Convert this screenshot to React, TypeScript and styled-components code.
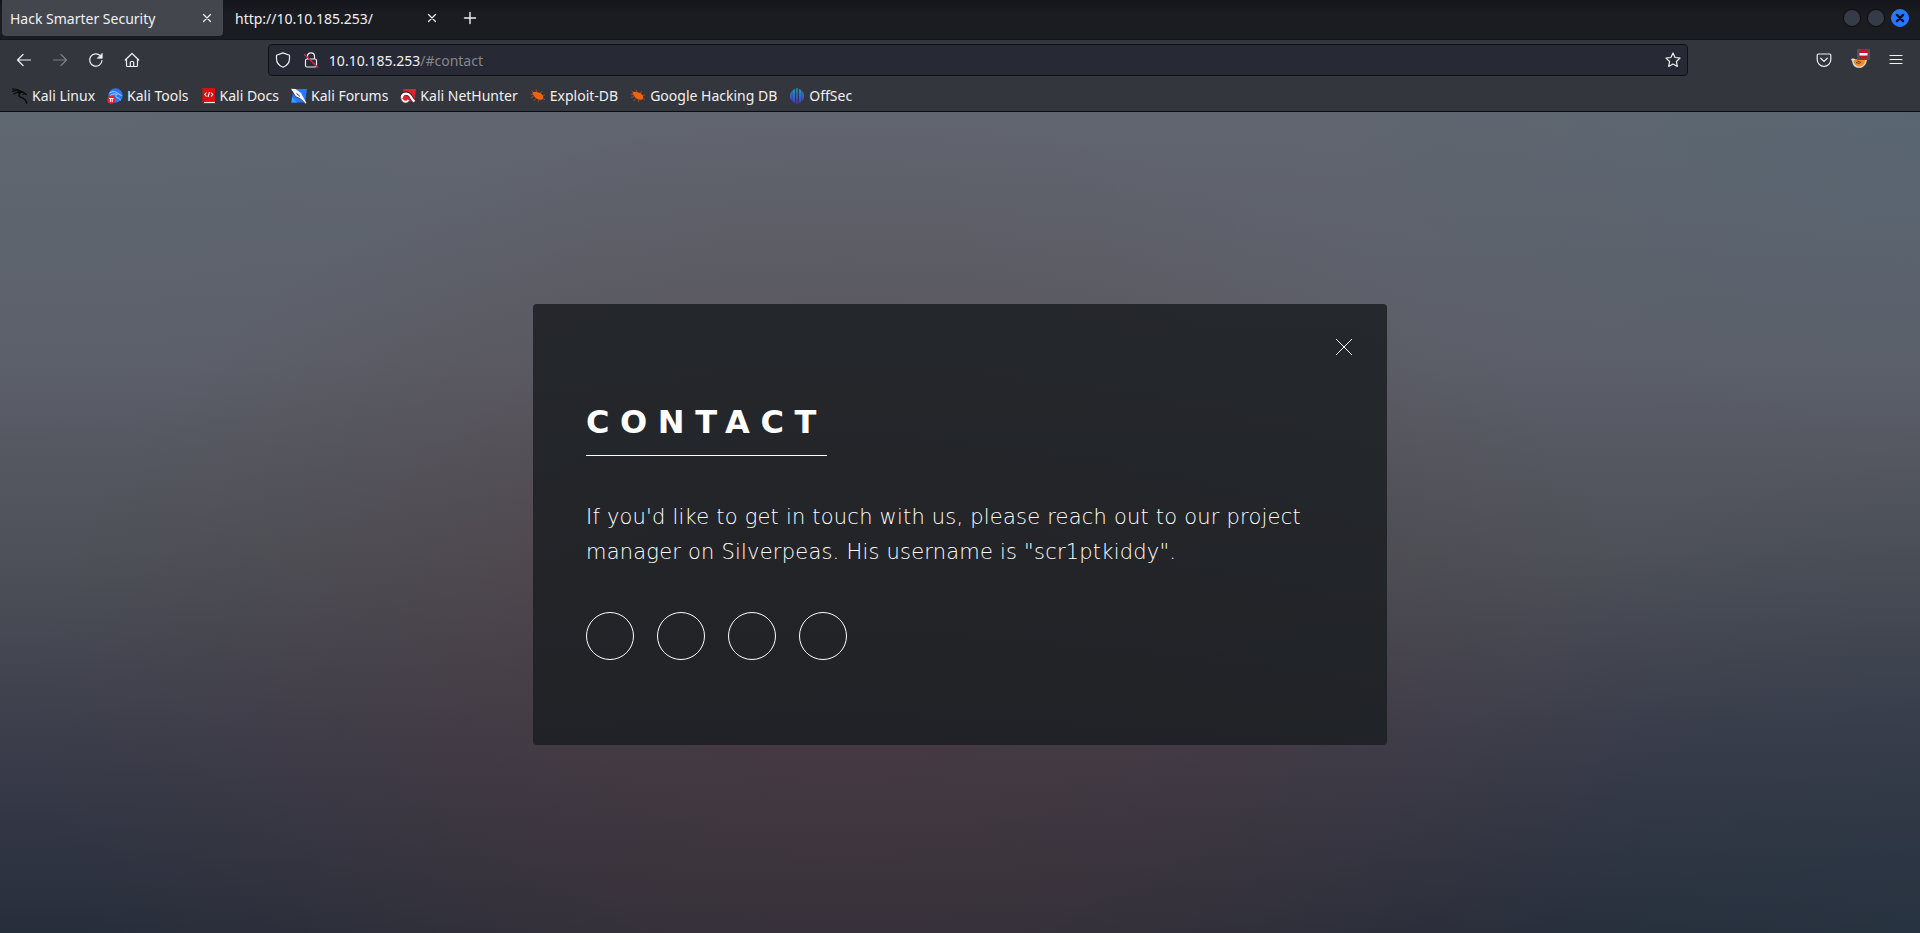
import React from "react";
import styled, { createGlobalStyle } from "styled-components";

const Global = createGlobalStyle`
  *, *::before, *::after { box-sizing: border-box; }
  html, body, #root { height: 100%; margin: 0; }
  body { background: #2a2e3b; color: #f0f0f3; font-family: "Noto Sans", sans-serif; }
  a { color: inherit; text-decoration: none; }
  button { padding: 0; border: 0; background: none; color: inherit; font: inherit; }
  svg { display: block; flex: none; }
`;

const Window = styled.div`
  display: flex;
  flex-direction: column;
  min-height: 100%;
`;

const TitleBar = styled.header`
  display: flex;
  gap: 4px;
  height: 40px;
  padding: 0 11px 3px 2px;
  background: linear-gradient(#14151a, #1b1c21 14px);
  border-bottom: 1px solid #15161a;
`;

const TabList = styled.div`
  display: flex;
  gap: 4px;
`;

const TabBox = styled.div<{ $active?: boolean }>`
  display: flex;
  align-items: center;
  width: 221px;
  height: 36px;
  padding-right: 6px;
  border-radius: 0 0 4px 4px;
  background: ${(p) => (p.$active ? "#43464d" : "transparent")};
`;

const TabLabel = styled.button`
  flex: 1;
  height: 36px;
  padding: 1px 0 0 8px;
  text-align: left;
  font-size: 14px;
  line-height: 36px;
`;

const IconButton = styled.button<{ $size: number; $dim?: boolean }>`
  display: flex;
  align-items: center;
  justify-content: center;
  flex: none;
  width: ${(p) => p.$size}px;
  height: ${(p) => p.$size}px;
  opacity: ${(p) => (p.$dim ? 0.4 : 1)};
`;

const WindowControls = styled.div`
  display: flex;
  align-items: center;
  gap: 6px;
  margin-left: auto;
`;

const WindowDot = styled.button<{ $close?: boolean }>`
  display: flex;
  align-items: center;
  justify-content: center;
  width: 18px;
  height: 18px;
  border-radius: 50%;
  background: ${(p) => (p.$close ? "#2777ff" : "#363b48")};
  border: 1px solid ${(p) => (p.$close ? "#2777ff" : "#0b0c0f")};
  color: #111318;
`;

const NavBar = styled.nav`
  display: flex;
  align-items: center;
  height: 40px;
  padding: 0 6px;
  background: #34363d;
`;

const Spacer = styled.div`
  flex: 1;
`;

const AddressBar = styled.div`
  display: flex;
  align-items: center;
  flex: 12;
  height: 32px;
  padding: 0 4px 0 0;
  border: 1px solid #101116;
  border-radius: 4px;
  background: #272934;
`;

const AddressField = styled.div`
  position: relative;
  flex: 1;
  height: 30px;
  margin-left: 4px;
  font-size: 14px;
  line-height: 30px;
`;

const AddressInput = styled.input`
  width: 100%;
  height: 30px;
  padding: 0;
  border: 0;
  outline: 0;
  background: none;
  color: transparent;
  font: inherit;
`;

const AddressText = styled.span`
  position: absolute;
  inset: 0;
  padding-top: 1px;
  pointer-events: none;
`;

const Faded = styled.span`
  color: #85868e;
`;

const Bookmarks = styled.nav`
  display: flex;
  align-items: center;
  gap: 12px;
  height: 32px;
  padding: 0 12px;
  background: #34363d;
  border-bottom: 1px solid #0c0d12;
`;

const Bookmark = styled.a`
  display: flex;
  align-items: center;
  gap: 4px;
  font-size: 14px;
  line-height: 24px;
  white-space: nowrap;
`;

const Page = styled.main`
  display: flex;
  align-items: center;
  justify-content: center;
  flex: 1;
  padding: 44px 20px 40px;
  background:
    radial-gradient(ellipse 42% 74% at 44% 74%, rgba(82, 54, 56, 0.48), rgba(82, 54, 56, 0.34) 40%, rgba(82, 54, 56, 0.12) 75%, rgba(82, 54, 56, 0)),
    radial-gradient(ellipse 34% 40% at 100% 0%, rgba(78, 104, 118, 0.4), rgba(78, 104, 118, 0)),
    radial-gradient(ellipse 34% 40% at 0% 0%, rgba(92, 106, 116, 0.4), rgba(92, 106, 116, 0)),
    radial-gradient(ellipse 26% 60% at 100% 100%, rgba(40, 58, 72, 0.4), rgba(40, 58, 72, 0)),
    linear-gradient(#61656f 0%, #5c5f69 30%, #4d5058 55%, #3a3c4a 78%, #272e3b 100%);
`;

const Panel = styled.article`
  position: relative;
  width: 100%;
  max-width: 854px;
  padding: 96px 53px 85px;
  border-radius: 4px;
  background: rgba(27, 31, 34, 0.85);
  color: #fff;
  font-family: "DejaVu Sans Light", "DejaVu Sans", sans-serif;
  font-weight: 200;
`;

const PanelClose = styled.button`
  position: absolute;
  top: 0;
  right: 0;
  display: flex;
  align-items: center;
  justify-content: center;
  width: 86px;
  height: 85px;
`;

const Heading = styled.h2`
  width: max-content;
  margin: 0 0 44px;
  padding-bottom: 10px;
  border-bottom: 1px solid #fff;
  font-family: "DejaVu Sans", sans-serif;
  font-size: 32px;
  line-height: 45px;
  font-weight: 700;
  letter-spacing: 0.33em;
  text-transform: uppercase;
`;

const Copy = styled.p`
  margin: 0 0 42px;
  font-size: 21px;
  line-height: 35px;
  letter-spacing: 0.01em;
`;

const SocialList = styled.ul`
  display: flex;
  gap: 23px;
  margin: 0;
  padding: 0;
  list-style: none;
`;

const SocialLink = styled.a`
  display: block;
  width: 48px;
  height: 48px;
  border: 1px solid #fff;
  border-radius: 50%;
`;

type LineIconProps = { size?: number; width?: number; children: React.ReactNode };

const LineIcon = ({ size = 16, width = 1.2, children }: LineIconProps) => (
  <svg width={size} height={size} viewBox="0 0 16 16" fill="none" stroke="currentColor" strokeWidth={width} strokeLinecap="round" strokeLinejoin="round" aria-hidden="true">
    {children}
  </svg>
);

const Cross = () => (
  <LineIcon><path d="M4.5 4.5l7 7M11.5 4.5l-7 7" /></LineIcon>
);

const Tab = ({ title, active }: { title: string; active?: boolean }) => (
  <TabBox $active={active}>
    <TabLabel role="tab" aria-selected={!!active}>{title}</TabLabel>
    <IconButton $size={20} aria-label={`Close ${title}`}><Cross /></IconButton>
  </TabBox>
);

const DragonMark = () => (
  <svg width="16" height="16" viewBox="0 0 16 16" fill="none" stroke="#08090b" strokeLinecap="round">
    <path strokeWidth="1.2" d="M.7 1.2C4 .6 6.5 1.3 8.500 3.5M.5 3.5C3 2.2 6 2.6 8.8 4.2M1.8 6C4 4.4 6 4.2 8.2 4.6" />
    <path strokeWidth="1.5" d="M8 3.5c2 0 3.5.5 4.500 1.8l1.8 1M8.5 4.8C6.3 6 6.3 8.6 9 9.4c3 .8 4.8 1.8 5.7 5.6" />
    <path strokeWidth="1" d="M12.5 5.8l-1.5.6" />
  </svg>
);

const ToolsMark = () => (
  <svg width="16" height="16" viewBox="0 0 16 16">
    <circle cx="8.5" cy="7.5" r="7.2" fill="#2777ff" />
    <path d="M2.5 5C6 2.8 9 3.5 11 5.5l3.5 2M3 7.5c3-2 5.5-1.8 7.5-1M9.5 6.500c-1.5 2 0 3.2 1.7 3.5 1.5.3 2 1.5 2 2.5" fill="none" stroke="#b9d2ff" strokeWidth="1" />
    <circle cx="4.2" cy="11.8" r="4" fill="#e0262b" />
    <path d="M2 10.5h4.5M3.4 10.5V14M5.2 10.5V14" stroke="#fff" strokeWidth="1" />
  </svg>
);

const DocsMark = () => (
  <svg width="15" height="16" viewBox="0 0 15 16">
    <path d="M1.5 0h12.5v13.5H1.5z" fill="#d8100f" />
    <path d="M1.5 13.3H14v2.2H2.7z" fill="#e9dcdc" />
    <path d="M1.5 13v1.5c0 .8.5 1.3 1.3 1.3H14v-.7H3.5c-.8 0-.8-1.4 0-1.4H14V13z" fill="#a80c0c" />
    <path d="M5.5 4.5l-1.7 2 1.7 2M10 4.5l1.7 2-1.7 2M8.5 4L7 9" fill="none" stroke="#fff" strokeWidth="1.1" />
  </svg>
);

const ForumsMark = () => (
  <svg width="16" height="16" viewBox="0 0 16 16">
    <path d="M2.5 1H16l-2 13.5H.5z" fill="#2777ff" />
    <path d="M1 9l5 5.5H.5z" fill="#3fa0ff" />
    <path d="M0 .8L4.5 1 10 5l2 3.8 3.5 6.2-1.2.6-5-4.6-4.8-2.4z" fill="#f4f6fa" />
    <path d="M1 3l3.5 5.6 5 2.2 4 4M5.5 5.5l3.5 3" stroke="#343a4a" strokeWidth=".9" fill="none" />
  </svg>
);

const NetHunterMark = () => (
  <svg width="16" height="16" viewBox="0 0 16 16">
    <path d="M3.500 1H16l-1.500 12.500H1z" fill="#e3202c" />
    <path d="M1.500 10C1.500 5.500 5.500 4.500 8.500 6c3 1.600 2.500 5 6 7.500" fill="none" stroke="#4a1219" strokeWidth="4" />
    <path d="M2 10.500C1.300 6 5.500 4.800 8.500 6.300c3 1.600 2.500 5 6 7.200" fill="none" stroke="#fff" strokeWidth="2.4" />
    <path d="M2 11c1.500 3.500 5 3.500 6.500 1" fill="none" stroke="#fff" strokeWidth="1.8" />
  </svg>
);

const BugMark = () => (
  <svg width="16" height="16" viewBox="0 0 16 16">
    <path d="M4 5L1.5 2.5M7 4L6 1.5M10 5.5l2-2.5M12 7.5l3-.5M12.5 10.5l2.5 1M9 11l-.5 3M6 10.500L3.5 13M4 8.500l-3 1M3 6.500L.5 6" stroke="#a8501f" strokeWidth=".9" />
    <path d="M2.5 4.2C4.5 3 6.500 4 8.500 4.400c2.500.4 4.200 2.200 4.600 4.300.5 2.600-1.300 3.500-3.600 2.900C6 10.800 3 8 2.500 4.200z" fill="#f0620e" />
  </svg>
);

const OffSecMark = () => (
  <svg width="16" height="16" viewBox="0 0 16 16">
    <defs>
      <linearGradient id="offsec" x1="0" y1="0" x2="0" y2="16" gradientUnits="userSpaceOnUse">
        <stop offset="0" stopColor="#12a5ad" />
        <stop offset=".5" stopColor="#2c6cd0" />
        <stop offset="1" stopColor="#5d2bc4" />
      </linearGradient>
    </defs>
    <path fill="url(#offsec)" d="M6 .8v14.4A9 9 0 0 1 3.300 13V3A9 9 0 0 1 6 .8zM2.800 3v10A7.500 7.500 0 0 1 2.800 3zM7.200.3h1.600v15.400H7.200zM10 .8v14.400A9 9 0 0 0 12.700 13V3A9 9 0 0 0 10 .8zM13.200 3v10a7.500 7.500 0 0 0 0-10z" />
  </svg>
);

const ProxyMark = () => (
  <svg width="22" height="22" viewBox="0 0 22 22">
    <path d="M2 10c3-.8 4-.5 6 2l8-4 2-1c1 5-2 12-7.500 12C6 19 3.500 16 3.500 13.500z" fill="#ddd6cc" />
    <path d="M4.500 12c2.500-2.500 5-2.500 7-1l4.500-2c.8 4.500-1.500 8.500-5.500 8.500-2.500 0-5.500-2-6-5.500z" fill="#f08c26" />
    <path d="M7 13.500l3.500 1M8.500 12l3.500 1.500" stroke="#5b3211" strokeWidth=".9" />
    <rect x="8" y="0" width="13" height="11" rx="1" fill="#505257" />
    <circle cx="14.500" cy="5.200" r="4.900" fill="#c4142c" />
    <rect x="10.500" y="4" width="8" height="2.500" rx=".5" fill="#fff" />
  </svg>
);

const bookmarks: { label: string; icon: React.ReactNode }[] = [
  { label: "Kali Linux", icon: <DragonMark /> },
  { label: "Kali Tools", icon: <ToolsMark /> },
  { label: "Kali Docs", icon: <DocsMark /> },
  { label: "Kali Forums", icon: <ForumsMark /> },
  { label: "Kali NetHunter", icon: <NetHunterMark /> },
  { label: "Exploit-DB", icon: <BugMark /> },
  { label: "Google Hacking DB", icon: <BugMark /> },
  { label: "OffSec", icon: <OffSecMark /> },
];

const socials = ["Twitter", "Facebook", "Instagram", "GitHub"];

export default function App() {
  return (
    <>
      <Global />
      <Window>
        <TitleBar>
          <TabList role="tablist">
            <Tab title="Hack Smarter Security" active />
            <Tab title="http://10.10.185.253/" />
          </TabList>
          <IconButton $size={36} aria-label="New tab">
            <LineIcon width={1.4}><path d="M8 2.5v11M2.5 8h11" /></LineIcon>
          </IconButton>
          <WindowControls>
            <WindowDot aria-label="Minimize" />
            <WindowDot aria-label="Maximize" />
            <WindowDot $close aria-label="Close window">
              <LineIcon size={14} width={2.8}><path d="M4.5 4.5l7 7M11.5 4.5l-7 7" /></LineIcon>
            </WindowDot>
          </WindowControls>
        </TitleBar>

        <NavBar aria-label="Browser">
          <IconButton $size={36} aria-label="Back">
            <LineIcon><path d="M1.5 8h13M7 2.5L1.5 8 7 13.5" /></LineIcon>
          </IconButton>
          <IconButton $size={36} $dim aria-label="Forward">
            <LineIcon><path d="M14.5 8h-13M9 2.5L14.5 8 9 13.5" /></LineIcon>
          </IconButton>
          <IconButton $size={36} aria-label="Reload">
            <LineIcon>
              <path d="M14 8.5A6.2 6.2 0 1 1 12.3 3.7" />
              <path d="M14.3 1.5v4.8H9.5z" fill="currentColor" strokeWidth=".6" />
            </LineIcon>
          </IconButton>
          <IconButton $size={36} aria-label="Home">
            <LineIcon><path d="M1.2 8L8 1.5 14.8 8M2.5 7v6.5a1 1 0 0 0 1 1h9a1 1 0 0 0 1-1V7M6.300 14.500v-4a1 1 0 0 1 1-1h1.400a1 1 0 0 1 1 1v4" /></LineIcon>
          </IconButton>
          <Spacer />
          <AddressBar>
            <IconButton $size={28} aria-label="Tracking protection">
              <LineIcon><path d="M8 .9l6.500 2.300v3.300c0 4-2.700 7.300-6.500 8.700-3.800-1.400-6.500-4.700-6.500-8.700V3.200z" /></LineIcon>
            </IconButton>
            <IconButton $size={28} aria-label="Connection not secure">
              <LineIcon>
                <path d="M4.500 7V4.300a3.500 3.500 0 0 1 7 0V7M4 7h8a1.500 1.500 0 0 1 1.500 1.500v5A1.500 1.500 0 0 1 12 15H4a1.500 1.500 0 0 1-1.500-1.500v-5A1.500 1.500 0 0 1 4 7z" />
                <path d="M1.500 2.500L14.500 15" stroke="#e22850" strokeWidth="1.4" />
              </LineIcon>
            </IconButton>
            <AddressField>
              <AddressInput aria-label="Address" defaultValue="10.10.185.253/#contact" spellCheck={false} />
              <AddressText aria-hidden="true">10.10.185.253<Faded>/#contact</Faded></AddressText>
            </AddressField>
            <IconButton $size={20} aria-label="Bookmark this page">
              <LineIcon><path d="M8 1l2.100 4.500 4.900.6-3.600 3.400.9 4.900L8 12l-4.300 2.400.9-4.900L1 6.100l4.900-.6z" /></LineIcon>
            </IconButton>
          </AddressBar>
          <Spacer />
          <IconButton $size={36} aria-label="Save to Pocket">
            <LineIcon><path d="M2.500 2h11A1.300 1.300 0 0 1 14.800 3.300V7.500a6.800 6.800 0 0 1-13.600 0V3.300A1.300 1.300 0 0 1 2.500 2zM4.700 6.200L8 9.400l3.300-3.200" /></LineIcon>
          </IconButton>
          <IconButton $size={36} aria-label="Proxy settings"><ProxyMark /></IconButton>
          <IconButton $size={36} aria-label="Menu">
            <LineIcon><path d="M2 3.5h12M2 7.5h12M2 11.5h12" /></LineIcon>
          </IconButton>
        </NavBar>

        <Bookmarks aria-label="Bookmarks">
          {bookmarks.map((b) => (
            <Bookmark key={b.label} href="#">{b.icon}{b.label}</Bookmark>
          ))}
        </Bookmarks>

        <Page>
          <Panel>
            <Heading>Contact</Heading>
            <Copy>
              If you'd like to get in touch with us, please reach out to our project manager on Silverpeas. His username is "scr1ptkiddy".
            </Copy>
            <SocialList>
              {socials.map((name) => (
                <li key={name}><SocialLink href="#" aria-label={name} /></li>
              ))}
            </SocialList>
            <PanelClose aria-label="Close">
              <svg width="16" height="16" viewBox="0 0 16 16" stroke="#fff" strokeWidth="1"><path d="M0 0l16 16M16 0L0 16" /></svg>
            </PanelClose>
          </Panel>
        </Page>
      </Window>
    </>
  );
}
